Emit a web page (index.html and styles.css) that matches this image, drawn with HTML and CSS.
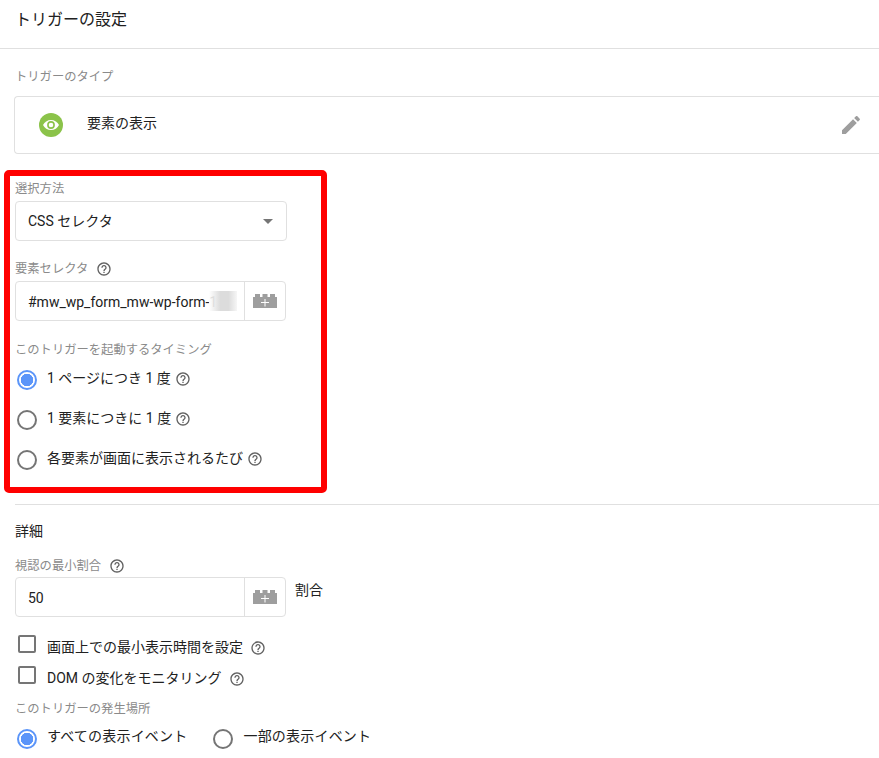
FILE: index.html
```html
<!DOCTYPE html>
<html lang="ja">
<head>
  <meta charset="UTF-8">
  <meta name="viewport" content="width=device-width, initial-scale=1.0">
  <title>トリガーの設定</title>
  <link rel="stylesheet" href="styles.css">
</head>
<body>
  <svg class="defs" width="0" height="0">
    <symbol id="help" viewBox="0 0 24 24">
      <path d="M11 18h2v-2h-2v2zm1-16C6.48 2 2 6.48 2 12s4.48 10 10 10 10-4.48 10-10S17.52 2 12 2zm0 18c-4.41 0-8-3.59-8-8s3.59-8 8-8 8 3.59 8 8-3.59 8-8 8zm0-14c-2.21 0-4 1.79-4 4h2c0-1.1.9-2 2-2s2 .9 2 2c0 2-3 1.75-3 5h2c0-2.25 3-2.5 3-5 0-2.21-1.79-4-4-4z"/>
    </symbol>
    <symbol id="brick" viewBox="0 0 24 14">
      <path fill-rule="evenodd" d="M2 0h5v3h2.500V0h5v3H17V0h5v3h2v11H0V3h2zM11.500 5v3H8v1h3.500v3.500h1V9H16V8h-3.500V5z" fill="#9e9e9e"/>
    </symbol>
  </svg>

  <header class="title-bar">トリガーの設定</header>

  <section class="type-section">
    <div class="label">トリガーのタイプ</div>
    <div class="type-card">
      <span class="type-icon">
        <svg width="16" height="10" viewBox="0 0 16 10">
          <path d="M8 0C4.500 0 1.500 2 0 5c1.500 3 4.500 5 8 5s6.500-2 8-5c-1.500-3-4.500-5-8-5z" fill="#fff"/>
          <circle cx="8" cy="5" r="3.100" fill="none" stroke="#8bc34a" stroke-width="1.600"/>
        </svg>
      </span>
      <span class="type-name">要素の表示</span>
      <svg class="edit-icon" width="24" height="24" viewBox="0 0 24 24">
        <path d="M3 17.250V21h3.750L17.810 9.940l-3.750-3.750L3 17.250zM20.710 7.040c.39-.39.39-1.020 0-1.410l-2.340-2.340c-.39-.39-1.020-.39-1.410 0l-1.830 1.830 3.750 3.750 1.830-1.830z"/>
      </svg>
    </div>
  </section>

  <section class="highlight">
    <div class="label label-first">選択方法</div>
    <div class="select-box">
      <span>CSS セレクタ</span>
      <span class="caret"></span>
    </div>

    <div class="label label-selector">要素セレクタ <svg class="help"><use href="#help"/></svg></div>
    <div class="var-input">
      <div class="var-value">#mw_wp_form_mw-wp-form-1<span class="blur"></span></div>
      <div class="var-btn"><svg width="24" height="14"><use href="#brick"/></svg></div>
    </div>

    <div class="label label-timing">このトリガーを起動するタイミング</div>
    <label class="radio-row"><input type="radio" name="timing" checked><span>1 ページにつき 1 度</span><svg class="help"><use href="#help"/></svg></label>
    <label class="radio-row"><input type="radio" name="timing"><span>1 要素につきに 1 度</span><svg class="help"><use href="#help"/></svg></label>
    <label class="radio-row"><input type="radio" name="timing"><span>各要素が画面に表示されるたび</span><svg class="help"><use href="#help"/></svg></label>
  </section>

  <section class="details">
    <h2>詳細</h2>
    <div class="label label-ratio">視認の最小割合 <svg class="help"><use href="#help"/></svg></div>
    <div class="ratio-row">
      <div class="var-input">
        <div class="var-value">50</div>
        <div class="var-btn"><svg width="24" height="14"><use href="#brick"/></svg></div>
      </div>
      <span class="unit">割合</span>
    </div>

    <label class="check-row check-first"><input type="checkbox"><span>画面上での最小表示時間を設定</span><svg class="help help-wide"><use href="#help"/></svg></label>
    <label class="check-row"><input type="checkbox"><span>DOM の変化をモニタリング</span><svg class="help help-wide"><use href="#help"/></svg></label>

    <div class="label label-where">このトリガーの発生場所</div>
    <div class="where-row">
      <label class="radio-inline"><input type="radio" name="where" checked><span>すべての表示イベント</span></label>
      <label class="radio-inline"><input type="radio" name="where"><span>一部の表示イベント</span></label>
    </div>
  </section>
</body>
</html>
```

FILE: styles.css
```css
* {
  box-sizing: border-box;
}

html, body {
  height: 758px;
  overflow: hidden;
}

body {
  margin: 0;
  font-family: Roboto, "Noto Sans CJK JP", sans-serif;
  font-size: 14px;
  color: #212121;
  background: #fff;
}

.defs {
  position: absolute;
}

.title-bar {
  height: 49px;
  padding: 9px 15px 0;
  font-size: 16px;
  line-height: 22px;
  border-bottom: 1px solid #e0e0e0;
}

.type-section {
  padding: 19px 0 0 15px;
}

.label {
  display: flex;
  align-items: center;
  gap: 4px;
  font-size: 12.300px;
  line-height: 18px;
  color: #8a8a8a;
}

.type-card {
  display: flex;
  align-items: center;
  height: 58px;
  margin-top: 10px;
  margin-left: -1px;
  padding: 0 16px 0 24px;
  border: 1px solid #e0e0e0;
  border-right: 0;
  border-radius: 4px 0 0 4px;
}

.type-icon {
  display: flex;
  align-items: center;
  justify-content: center;
  width: 24px;
  height: 24px;
  border-radius: 50%;
  background: #8bc34a;
}

.type-name {
  margin-left: 24px;
  line-height: 20px;
  margin-top: -4px;
}

.edit-icon {
  margin-left: auto;
  fill: #9e9e9e;
}

.highlight {
  width: 323px;
  height: 323px;
  margin: 16px 0 0 4px;
  padding: 0 5px;
  border: 6px solid #f00;
  border-radius: 5px;
}

.label-first {
  margin-top: 4px;
}

.select-box {
  display: flex;
  align-items: center;
  justify-content: space-between;
  width: 272px;
  height: 40px;
  margin-top: 3px;
  padding: 0 13px 0 12px;
  border: 1px solid #e0e0e0;
  border-radius: 4px;
  line-height: 34px;
}

.caret {
  width: 0;
  height: 0;
  border-left: 5px solid transparent;
  border-right: 5px solid transparent;
  border-top: 5px solid #757575;
}

.label-selector {
  margin-top: 19px;
  gap: 8px;
}

.help {
  flex: none;
  width: 16px;
  height: 16px;
  margin-left: 4px;
  fill: #616161;
}

.label .help {
  margin-left: 0;
}

.var-input {
  display: flex;
  width: 271px;
  height: 40px;
  border: 1px solid #e0e0e0;
  border-radius: 4px;
}

.highlight .var-input {
  margin-top: 3px;
}

.var-value {
  position: relative;
  width: 228px;
  padding: 1px 12px 0;
  line-height: 38px;
  white-space: nowrap;
  overflow: hidden;
}

.blur {
  position: absolute;
  left: 193px;
  top: 9px;
  width: 28px;
  height: 20px;
  background: linear-gradient(to right, rgba(255, 255, 255, 0.85), #dcdcdc 40%, #dcdcdc 70%, #f6f6f6);
}

.var-btn {
  display: flex;
  align-items: center;
  justify-content: center;
  flex: 1;
  border-left: 1px solid #e0e0e0;
}

.label-timing {
  margin-top: 20px;
}

.radio-row {
  display: flex;
  align-items: center;
  height: 40px;
  margin-left: 2px;
}

.label-timing + .radio-row {
  margin-top: 1px;
}

.radio-row span {
  margin-left: 10px;
  line-height: 20px;
  margin-top: -5px;
}

.radio-row .help {
  margin-top: -2px;
}

input[type="radio"], input[type="checkbox"] {
  appearance: none;
  flex: none;
  margin: 0;
  background: #fff;
}

input[type="radio"] {
  width: 20px;
  height: 20px;
  border: 2px solid #757575;
  border-radius: 50%;
}

input[type="radio"]:checked {
  border-color: #5b95f9;
  background: radial-gradient(circle, #5b95f9 0, #5b95f9 6px, #fff 6.500px);
}

.details {
  margin: 11px 0 0 15px;
  border-top: 1px solid #e0e0e0;
}

.details h2 {
  margin: 16px 0 0;
  font-size: 14px;
  font-weight: 400;
  line-height: 20px;
}

.label-ratio {
  margin-top: 16px;
  gap: 8px;
}

.ratio-row {
  display: flex;
  align-items: flex-start;
  margin-top: 2px;
}

.unit {
  margin: 3px 0 0 9px;
  line-height: 20px;
}

.check-row {
  display: flex;
  align-items: center;
  height: 31px;
  margin-left: 3px;
}

.check-first {
  margin-top: 14px;
}

.check-row input {
  width: 18px;
  height: 18px;
  margin-top: -6px;
  border: 2px solid #757575;
  border-radius: 2px;
}

.check-row span {
  margin-left: 11px;
  line-height: 20px;
}

.help-wide {
  margin-left: 7px;
  margin-top: 2px;
}

.label-where {
  margin-top: 0;
  padding-top: 7px;
}

.where-row {
  display: flex;
  margin: 11px 0 0 2px;
}

.radio-inline {
  display: flex;
  align-items: center;
  margin-right: 26px;
}

.radio-inline span {
  margin: -7px 0 0 10px;
  line-height: 20px;
  letter-spacing: 0.2px;
}
```
